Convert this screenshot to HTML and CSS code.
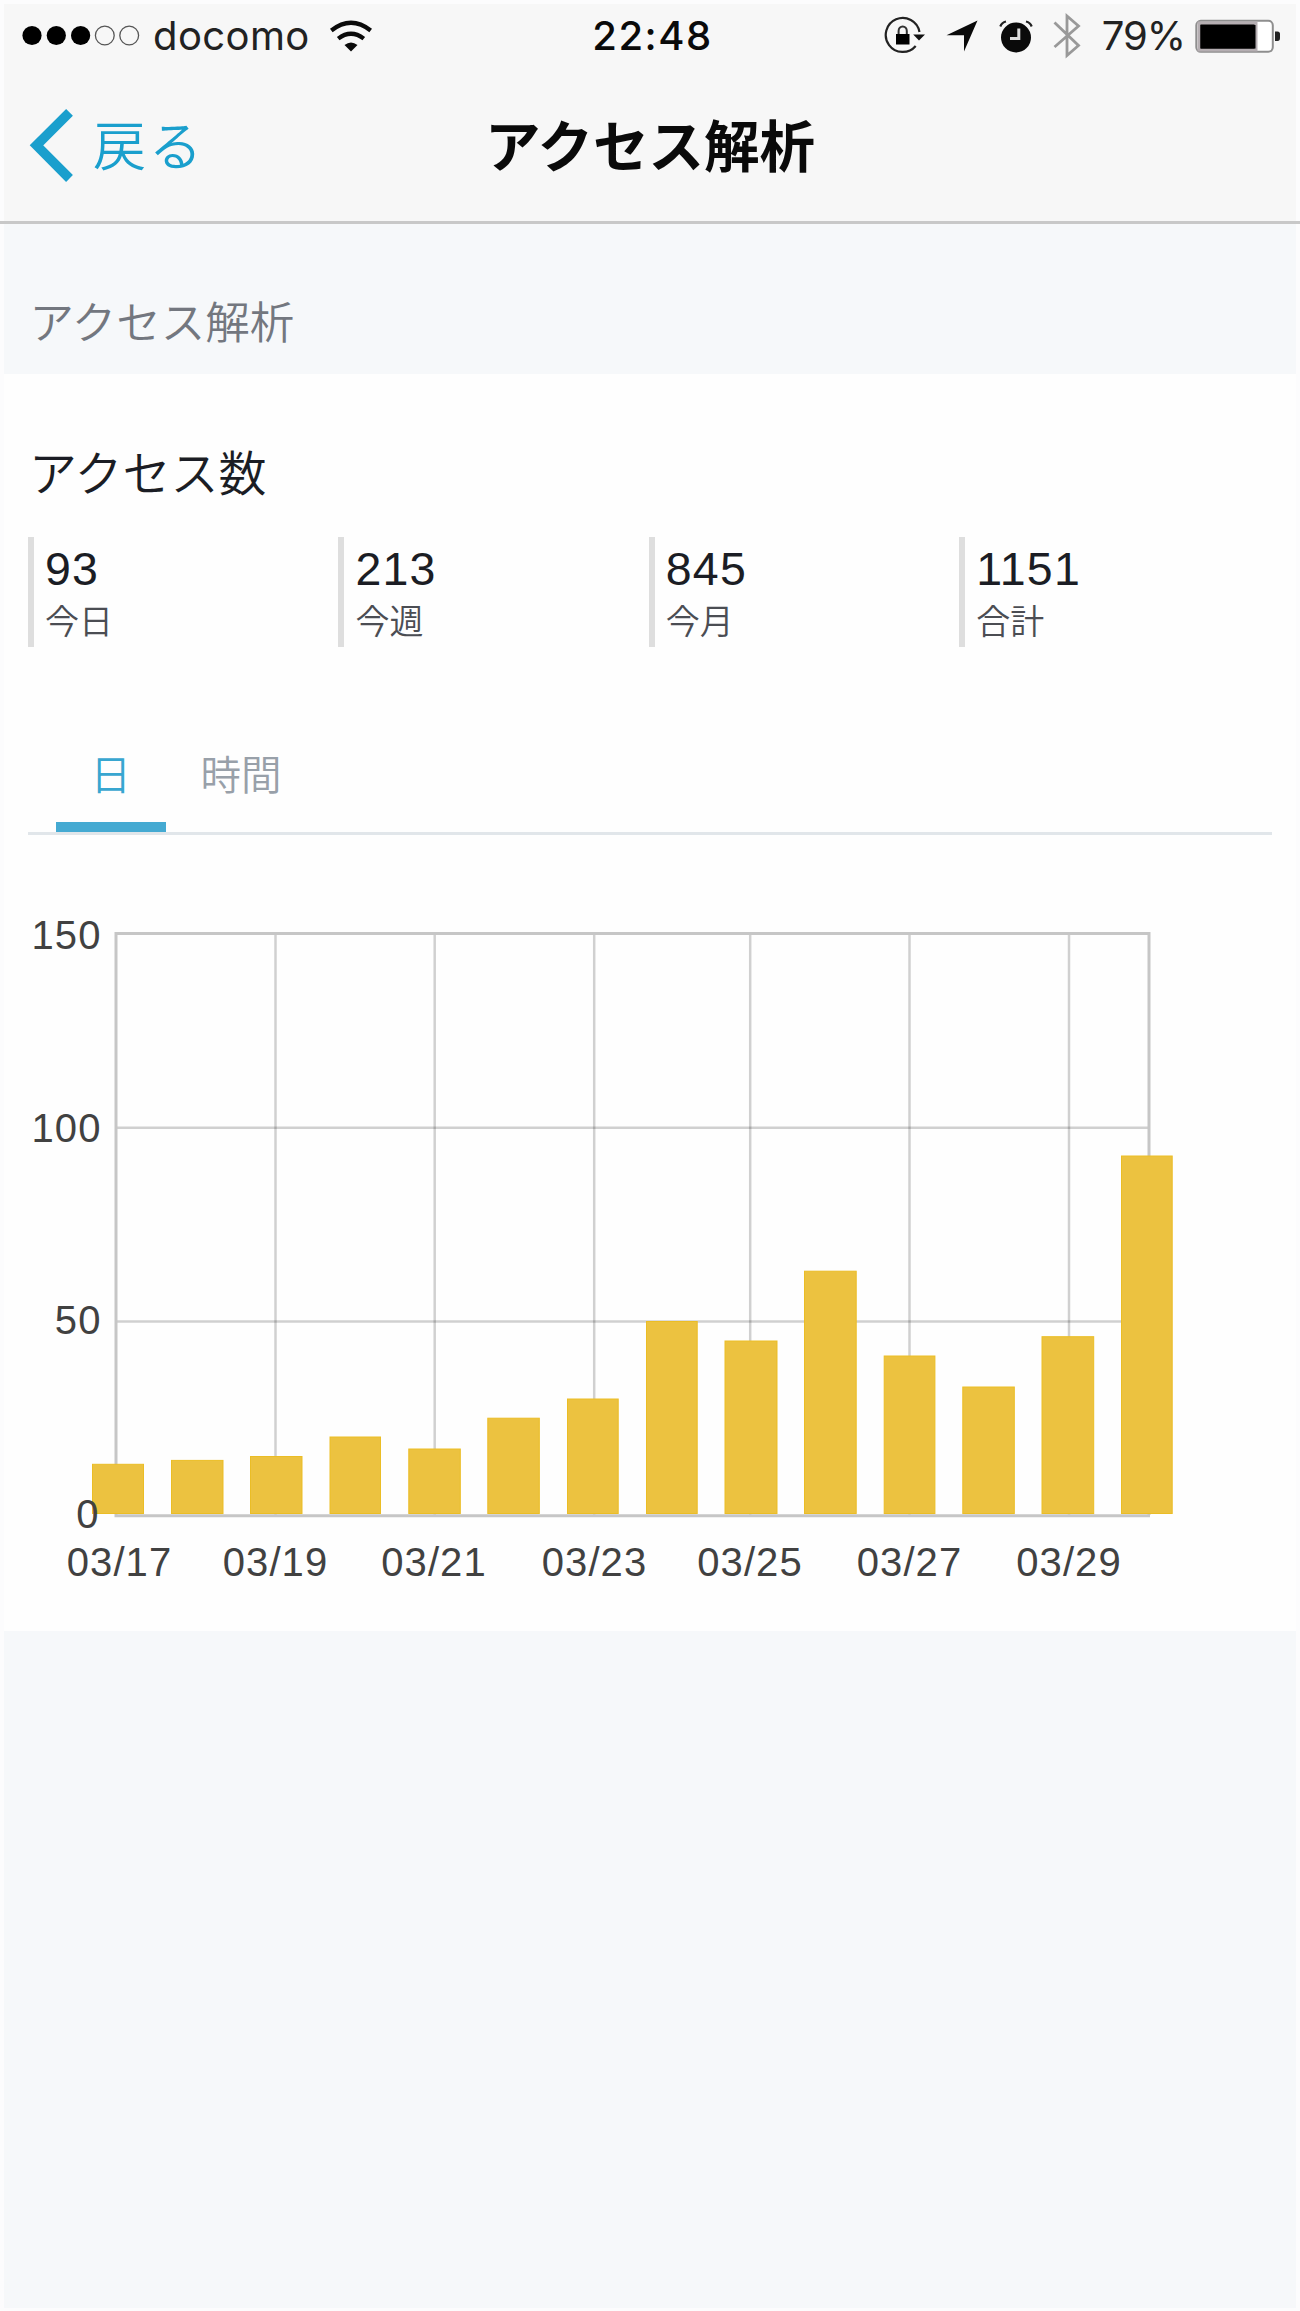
FILE: index.html
```html
<!DOCTYPE html>
<html lang="ja">
<head>
<meta charset="utf-8">
<title>アクセス解析</title>
<link rel="stylesheet" href="styles.css">
</head>
<body>
<div class="screen">
  <header class="header">
    <div class="status">
      <div class="status-left">
        <svg class="signal" width="118" height="24" viewBox="22 24 118 24">
          <g fill="#000"><circle cx="32" cy="35.5" r="9.6"/><circle cx="56.3" cy="35.5" r="9.6"/><circle cx="80.6" cy="35.5" r="9.6"/></g>
          <g fill="none" stroke="#555" stroke-width="1.3"><circle cx="104.8" cy="35.5" r="9.4"/><circle cx="129.2" cy="35.5" r="9.4"/></g>
        </svg>
        <span class="carrier">docomo</span>
        <svg class="wifi" width="42" height="32" viewBox="330 18 42 32">
          <g fill="none" stroke="#0a0a0a" stroke-width="4.3">
            <path d="M331.3 28.5Q351 13 370.7 28.5"/>
            <path d="M338.2 36.6Q351 27 363.8 36.6"/>
          </g>
          <path d="M344.5 43Q351 38 357.5 43L351 49.6Z" fill="#0a0a0a"/>
        </svg>
      </div>
      <time class="clock">22:48</time>
      <div class="status-right">
        <svg class="lock" width="42" height="40" viewBox="884 15 42 40">
          <path d="M919.500 31A17 17 0 1 0 915.700 45" fill="none" stroke="#222" stroke-width="2.200"/>
          <path d="M913.200 33.500H925L919 39.500Z" fill="#111"/>
          <rect x="896" y="33" width="13.500" height="10.500" fill="#000"/>
          <path d="M898.600 33V30a4.100 4.600 0 0 1 8.200 0V33" fill="none" stroke="#333" stroke-width="2"/>
        </svg>
        <svg class="arrow" width="32" height="32" viewBox="946 20 32 32"><path d="M977.500 20.500L964 51.500V35.200H946.500Z" fill="#0a0a0a"/></svg>
        <svg class="alarm" width="36" height="34" viewBox="998 17 36 34">
          <circle cx="1016" cy="35.500" r="15" fill="#0a0a0a"/>
          <path d="M1000.300 24.500Q1001.800 20.500 1006 19.500M1031.700 24.500Q1030.200 20.500 1026 19.500" fill="none" stroke="#222" stroke-width="2.200"/>
          <path d="M1018.800 26.500V36.500H1010" fill="none" stroke="#ddd" stroke-width="3"/>
        </svg>
        <svg class="bluetooth" width="28" height="48" viewBox="1053 12 28 48"><path d="M1054.500 22.500L1078.500 45.500L1067 55.500V16L1078.500 26L1054.500 47" fill="none" stroke="#999" stroke-width="2.800"/></svg>
        <span class="percent">79%</span>
        <svg class="battery" width="86" height="34" viewBox="1195 18 86 34">
          <rect x="1196.300" y="19.800" width="76.500" height="31" rx="4.500" fill="#fff" stroke="#8e8e8e" stroke-width="2"/>
          <path d="M1199 22h57v27h-57Z" fill="#000" stroke="#b5aeb2" stroke-width="3"/>
          <rect x="1200.500" y="24" width="55" height="23.500" fill="#000"/>
          <path d="M1275 30.500h2.500q2.500 0 2.500 2.500v4q0 3-2.500 3h-2.500Z" fill="#222"/>
        </svg>
      </div>
    </div>
    <nav class="nav">
      <a class="back">
        <svg width="46" height="74" viewBox="28 108 46 74"><path d="M69.500 112.300L36.500 145.300L69.500 178.500" fill="none" stroke="#1a9fcd" stroke-width="9.600"/></svg>
        <span>戻る</span>
      </a>
      <h1 class="title">アクセス解析</h1>
    </nav>
  </header>
  <h2 class="section">アクセス解析</h2>
  <main class="panel">
    <h3 class="heading">アクセス数</h3>
    <div class="stats">
      <div class="stat"><b>93</b><span>今日</span></div>
      <div class="stat"><b>213</b><span>今週</span></div>
      <div class="stat"><b>845</b><span>今月</span></div>
      <div class="stat"><b>1151</b><span>合計</span></div>
    </div>
    <div class="tabs">
      <div class="tab active">日</div>
      <div class="tab">時間</div>
    </div>
    <svg class="chart" width="1292" height="731" viewBox="4 900 1292 731">
      <g class="grid">
        <path d="M275.500 933V1515M434.700 933V1515M594.200 933V1515M750.200 933V1515M909.500 933V1515M1069 933V1515"/>
        <path d="M116 1127.700H1149M116 1321.500H1149"/>
      </g>
      <path class="frame" d="M114.500 1515.700H1150M116 1515V933.500H1149V1515"/>
      <g class="bars">
        <rect x="92.500" y="1464.300" width="51" height="49.200"/>
        <rect x="171.500" y="1460.400" width="51.500" height="53.100"/>
        <rect x="250.500" y="1456.500" width="51.500" height="57"/>
        <rect x="330" y="1437" width="50.500" height="76.500"/>
        <rect x="408.800" y="1449" width="51.500" height="64.500"/>
        <rect x="487.800" y="1418.200" width="51.500" height="95.300"/>
        <rect x="567.500" y="1399" width="50.700" height="114.500"/>
        <rect x="646.500" y="1321.500" width="50.700" height="192"/>
        <rect x="725" y="1341" width="52" height="172.500"/>
        <rect x="804.500" y="1271.200" width="51.700" height="242.300"/>
        <rect x="884.200" y="1356" width="50.700" height="157.500"/>
        <rect x="962.800" y="1387" width="51.500" height="126.500"/>
        <rect x="1042" y="1336.700" width="51.700" height="176.800"/>
        <rect x="1121.500" y="1156" width="50.700" height="357.500"/>
      </g>
      <g class="labels ylabels">
        <text x="101.500" y="949">150</text><text x="101.500" y="1142">100</text><text x="101.500" y="1333.500">50</text><text x="99.500" y="1527.500">0</text>
      </g>
      <g class="labels xlabels">
        <text x="119.500" y="1576">03/17</text><text x="275.500" y="1576">03/19</text><text x="434" y="1576">03/21</text><text x="594.500" y="1576">03/23</text><text x="750" y="1576">03/25</text><text x="909.500" y="1576">03/27</text><text x="1069" y="1576">03/29</text>
      </g>
    </svg>
  </main>
</div>
</body>
</html>
```
FILE: styles.css
```css
* { box-sizing: border-box; }
body {
  margin: 0;
  background: #fcfcfd;
  font-family: "Liberation Sans", "Noto Sans CJK JP", sans-serif;
  color: #1b1d24;
}
svg { display: block; flex: none; }
h1, h2, h3 { margin: 0; font-weight: 400; }
.screen {
  height: 2311px;
  padding: 4px 4px 3px;
  background: #f6f8fa content-box;
}
.header {
  height: 220px;
  background: #f7f7f7;
  border-bottom: 3px solid #c8c8c8;
  color: #0a0a0a;
  margin: 0 -4px;
  padding: 0 4px;
  background-clip: content-box;
}
.status {
  display: grid;
  grid-template-columns: 1fr auto 1fr;
  align-items: center;
  height: 64px;
  padding: 0 15px 0 18px;
  font-family: Inter, sans-serif;
  font-size: 40px;
  line-height: 64px;
}
.status-left, .status-right { display: flex; align-items: center; }
.status-right { justify-content: flex-end; }
.carrier { margin-left: 13px; color: #222; letter-spacing: .4px; }
.wifi { margin-left: 20px; }
.clock { padding-left: 2px; font-weight: 500; letter-spacing: 1.500px; }
.arrow { margin-left: 20px; }
.alarm { margin-left: 20px; }
.bluetooth { margin-left: 19px; }
.percent { margin-left: 21px; color: #222; letter-spacing: -1px; }
.battery { margin-left: 10px; }
.nav {
  display: grid;
  grid-template-columns: 1fr auto 1fr;
  align-items: center;
  height: 153px;
  padding: 0 24px;
}
.back {
  display: flex;
  align-items: center;
  gap: 19px;
  color: #1a9fcd;
  font-size: 53px;
  line-height: 74px;
}
.back span {
  padding-bottom: 3px;
  font-family: "Noto Sans CJK JP", sans-serif;
  font-weight: 350;
  letter-spacing: 3px;
}
.title {
  padding-bottom: 3px;
  font-size: 55.500px;
  font-weight: 600;
}
.section {
  height: 150px;
  padding: 0 25.500px;
  color: #73777f;
  font-size: 44.500px;
  font-weight: 350;
  line-height: 199px;
}
.panel { height: 1257px; background: #fefefe; }
.heading {
  height: 163px;
  padding: 64px 25px 0;
  font-size: 48px;
  font-weight: 350;
  line-height: 74px;
}
.stats {
  display: grid;
  grid-template-columns: repeat(4, 310.400px);
  grid-template-rows: 110px;
  height: 110px;
  padding-left: 24px;
}
.stat {
  display: flex;
  flex-direction: column;
  border-left: 6px solid #dedede;
  padding: 7px 0 0 11px;
}
.stat b { font-size: 46.500px; font-weight: 400; line-height: 50px; letter-spacing: 1.200px; }
.stat span { font-size: 34px; font-weight: 350; line-height: 56px; color: #4b4d53; }
.tabs {
  display: flex;
  height: 118px;
  margin: 70px 24px 0;
  padding-left: 28px;
  border-bottom: 3px solid #e1e6ea;
}
.tab {
  padding: 0 35px;
  color: #98a0a9;
  font-size: 40.500px;
  font-weight: 350;
  line-height: 118px;
}
.tab.active { padding: 0 34.500px; color: #38a6d0; border-bottom: 10px solid #45aad2; }
.chart { margin-top: 65px; }
.grid path { fill: none; stroke: #000; stroke-opacity: .18; stroke-width: 2.500; }
.frame { fill: none; stroke: #c6c6c6; stroke-width: 3; }
.bars rect { fill: #ecc240; stroke: #ebbd25; stroke-width: 1; }
.labels { font-size: 40px; fill: #414141; letter-spacing: 1.100px; }
.ylabels { text-anchor: end; }
.xlabels { text-anchor: middle; }
```
